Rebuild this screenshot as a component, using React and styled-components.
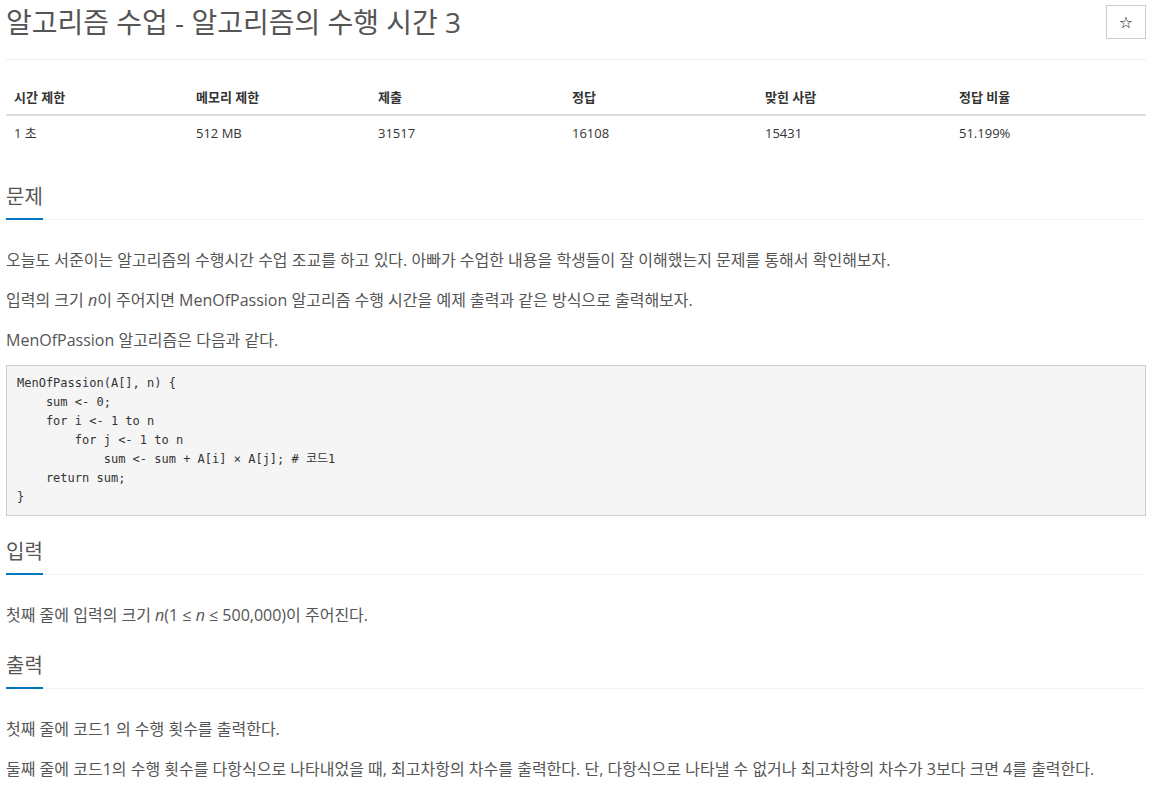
import React from 'react';
import styled, { createGlobalStyle } from 'styled-components';

const GlobalStyle = createGlobalStyle`
    body {
        margin: 0;
        background: #fff;
        font-family: "Open Sans", "Noto Sans CJK KR", sans-serif;
        color: #555;
    }
`;

const Page = styled.div`
    width: 1140px;
    padding: 0 0 0 6px;
`;

const Header = styled.div`
    display: flex;
    justify-content: space-between;
    align-items: flex-start;
    padding-top: 5px;
    padding-bottom: 20px;
    border-bottom: 1px solid #eee;
`;

const Title = styled.h1`
    margin: 0;
    font-size: 28px;
    font-weight: 400;
    line-height: 34px;
    color: #555;
`;

const StarButton = styled.button`
    width: 40px;
    height: 34px;
    border: 1px solid #ccc;
    background: #fff;
    font-size: 16px;
    font-weight: 700;
    color: #111;
    font-family: "DejaVu Sans", sans-serif;
    padding: 0;
`;

const Info = styled.div`
    margin: 20px 0 33px;
    font-size: 13px;
`;

const InfoRow = styled.div`
    display: grid;
    grid-template-columns: 182px 182px 194px 193px 194px 1fr;
    border-bottom: ${({ $head }) => ($head ? '2px solid #ddd' : 'none')};
    font-weight: ${({ $head }) => ($head ? 700 : 400)};
    color: #333;
`;

const Cell = styled.div`
    padding: 8px;
    line-height: 18px;
`;

const Section = styled.section``;

const Headline = styled.div`
    margin-top: 22px;
    margin-bottom: 25px;
    border-bottom: 1px dotted #e5e5e5;
    line-height: 0;
`;

const HeadlineText = styled.h2`
    display: inline-block;
    margin: 0 0 -1px;
    font-size: 20px;
    font-weight: 400;
    line-height: 28px;
    padding-bottom: 7px;
    border-bottom: 2px solid #0076c0;
    color: #555;
`;

const Text = styled.p`
    margin: 0 0 10px;
    font-size: 16px;
    line-height: 30px;
    color: #555;
`;

const Var = styled.i`
    font-family: "Open Sans", serif;
`;

const Code = styled.pre`
    margin: 0 0 10px;
    padding: 8px 10px;
    background: #f5f5f5;
    border: 1px solid #ccc;
    font-family: "DejaVu Sans Mono", "Noto Sans CJK KR", monospace;
    font-size: 12px;
    line-height: 19px;
    color: #333;
`;

const code = `MenOfPassion(A[], n) {
    sum <- 0;
    for i <- 1 to n
        for j <- 1 to n
            sum <- sum + A[i] × A[j]; # 코드1
    return sum;
}`;

const info = [
    ['시간 제한', '1 초'],
    ['메모리 제한', '512 MB'],
    ['제출', '31517'],
    ['정답', '16108'],
    ['맞힌 사람', '15431'],
    ['정답 비율', '51.199%'],
];

const Headline2 = ({ children }) => (
    <Headline>
        <HeadlineText>{children}</HeadlineText>
    </Headline>
);

const App = () => (
    <Page>
        <GlobalStyle />
        <Header>
            <Title>알고리즘 수업 - 알고리즘의 수행 시간 3</Title>
            <StarButton>☆</StarButton>
        </Header>

        <Info>
            <InfoRow $head>
                {info.map(([h]) => <Cell key={h}>{h}</Cell>)}
            </InfoRow>
            <InfoRow>
                {info.map(([h, v]) => <Cell key={h}>{v}</Cell>)}
            </InfoRow>
        </Info>

        <Section>
            <Headline2>문제</Headline2>
            <Text>오늘도 서준이는 알고리즘의 수행시간 수업 조교를 하고 있다. 아빠가 수업한 내용을 학생들이 잘 이해했는지 문제를 통해서 확인해보자.</Text>
            <Text>입력의 크기 <Var>n</Var>이 주어지면 MenOfPassion 알고리즘 수행 시간을 예제 출력과 같은 방식으로 출력해보자.</Text>
            <Text>MenOfPassion 알고리즘은 다음과 같다.</Text>
            <Code>{code}</Code>
        </Section>

        <Section>
            <Headline2>입력</Headline2>
            <Text>첫째 줄에 입력의 크기 <Var>n</Var>(1 ≤ <Var>n</Var> ≤ 500,000)이 주어진다.</Text>
        </Section>

        <Section>
            <Headline2>출력</Headline2>
            <Text>첫째 줄에 코드1 의 수행 횟수를 출력한다.</Text>
            <Text>둘째 줄에 코드1의 수행 횟수를 다항식으로 나타내었을 때, 최고차항의 차수를 출력한다. 단, 다항식으로 나타낼 수 없거나 최고차항의 차수가 3보다 크면 4를 출력한다.</Text>
        </Section>
    </Page>
);

export default App;
